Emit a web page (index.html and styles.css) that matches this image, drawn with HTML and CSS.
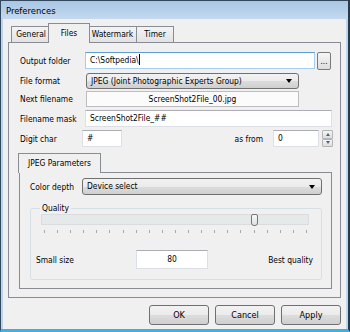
FILE: index.html
```html
<!DOCTYPE html>
<html lang="en">
<head>
    <meta charset="UTF-8">
    <title>Preferences</title>
    <link rel="stylesheet" href="styles.css">
</head>
<body>
<div class="window">
    <div class="titlebar">Preferences</div>
    <div class="client">
        <div class="tabs">
            <div class="tab t-general">General</div>
            <div class="tab t-files active">Files</div>
            <div class="tab t-watermark">Watermark</div>
            <div class="tab t-timer">Timer</div>
        </div>
        <div class="panel">
            <div class="row r1">
                <span class="lbl">Output folder</span>
                <div class="edit focus w-out">C:\Softpedia\<span class="caret"></span></div>
                <div class="dots">...</div>
            </div>
            <div class="row r2">
                <span class="lbl">File format</span>
                <div class="combo w-format">JPEG (Joint Photographic Experts Group)<span class="arrow"></span></div>
            </div>
            <div class="row r3">
                <span class="lbl">Next filename</span>
                <div class="readonly">ScreenShot2File_00.jpg</div>
            </div>
            <div class="row r4">
                <span class="lbl">Filename mask</span>
                <div class="edit w-mask">ScreenShot2File_##</div>
            </div>
            <div class="row r5">
                <span class="lbl">Digit char</span>
                <div class="edit w-digit">#</div>
                <span class="asfrom">as from</span>
                <div class="edit w-from">0</div>
                <div class="spin">
                    <div class="spin-btn"><span class="up"></span></div>
                    <div class="spin-btn"><span class="down"></span></div>
                </div>
            </div>

            <div class="subtabs">
                <div class="tab active t-jpeg">JPEG Parameters</div>
            </div>
            <div class="subpanel">
                <div class="row">
                    <span class="lbl lbl-depth">Color depth</span>
                    <div class="combo w-depth">Device select<span class="arrow"></span></div>
                </div>
                <fieldset class="group">
                    <legend>Quality</legend>
                    <div class="track">
                        <div class="thumb"></div>
                    </div>
                    <div class="ticks">
                        <i></i><i></i><i></i><i></i><i></i><i></i><i></i>
                        <i></i><i></i><i></i><i></i><i></i><i></i><i></i>
                        <i></i><i></i><i></i><i></i><i></i><i></i><i></i>
                    </div>
                    <div class="row quality-row">
                        <span class="lbl-small">Small size</span>
                        <div class="edit w-quality">80</div>
                        <span class="lbl-best">Best quality</span>
                    </div>
                </fieldset>
            </div>
        </div>
        <div class="buttons">
            <button class="btn">OK</button>
            <button class="btn">Cancel</button>
            <button class="btn">Apply</button>
        </div>
    </div>
</div>
</body>
</html>
```

FILE: styles.css
```css
html, body {
    margin: 0;
    padding: 0;
}

body {
    width: 350px;
    height: 332px;
    overflow: hidden;
    font-family: "DejaVu Sans Condensed", "DejaVu Sans", sans-serif;
    font-stretch: condensed;
    font-size: 8.4px;
    color: #000;
}

.window {
    width: 350px;
    height: 332px;
    box-sizing: border-box;
    border-left: 1px solid #34485d;
    border-top: 1px solid #34485d;
    border-right: 2px solid #2b3a4a;
    border-bottom: 3px solid #3fb0e0;
    background: #bcd4ec;
    padding: 0 2px 0 2px;
    display: flex;
    flex-direction: column;
}

.titlebar {
    height: 18px;
    line-height: 19px;
    font-size: 9.4px;
    background: linear-gradient(#a9c6e4, #c3d9ef);
    margin: 0 -2px;
    padding-left: 5px;
}

.client {
    flex: 1;
    background: #f0f0f0;
    padding: 4px 5px 0 5px;
}

/* tabs */

.tabs, .subtabs {
    display: flex;
    align-items: flex-end;
    height: 19px;
    padding-left: 3px;
}

.tab {
    box-sizing: border-box;
    height: 16px;
    line-height: 15px;
    text-align: center;
    border: 1px solid #898c95;
    border-bottom: 0;
    margin-right: -1px;
    background: linear-gradient(#f4f4f4, #e2e2e2);
}

.tab.active {
    position: relative;
    z-index: 1;
    height: 20px;
    line-height: 18px;
    margin: 0 -2px -1px -2px;
    background: #f0f0f0;
}

.t-general { width: 40px; }
.t-files { width: 42px; }
.t-watermark { width: 49px; }
.t-timer { width: 38px; }

.panel {
    box-sizing: border-box;
    height: 256px;
    border: 1px solid #898c95;
    background: #f0f0f0;
    padding: 9px 7px 0 11px;
}

/* rows */

.row {
    display: flex;
    align-items: center;
    height: 17px;
}

.r2 { margin-top: 4px; height: 16px; }
.r3 { margin-top: 2px; height: 16px; }
.r4 { margin-top: 3px; }
.r5 { margin-top: 3px; }

.lbl {
    width: 65px;
    flex: none;
}

.edit {
    box-sizing: border-box;
    height: 100%;
    background: #fff;
    border: 1px solid #dcdfe6;
    border-top-color: #abadb3;
    padding-left: 4px;
    line-height: 15px;
    white-space: nowrap;
}

.edit.focus {
    border-color: #a7cdef;
    border-top-color: #5f9bd3;
}

.caret {
    display: inline-block;
    width: 1px;
    height: 11px;
    background: #000;
    vertical-align: -2px;
}

.w-out { width: 230px; }
.w-mask { width: 247px; }
.w-digit { width: 40px; margin-left: -3px; }
.w-from { width: 46px; }

.dots {
    box-sizing: border-box;
    width: 14px;
    height: 18px;
    margin-left: 2px;
    border: 1px solid #7a7a7a;
    border-radius: 2px;
    background: linear-gradient(#f6f6f6, #dddddd);
    font-size: 8px;
    text-align: center;
    line-height: 18px;
}

.combo {
    position: relative;
    box-sizing: border-box;
    height: 100%;
    margin-left: 1px;
    border: 1px solid #707070;
    border-radius: 3px;
    background: linear-gradient(#f2f2f2 0%, #ebebeb 50%, #dddddd 50%, #cfcfcf 100%);
    padding-left: 4px;
    line-height: 14px;
    white-space: nowrap;
}

.w-format { width: 213px; }
.w-depth { width: 240px; margin-left: 0; height: 17px; line-height: 15px; }

.arrow {
    position: absolute;
    right: 6px;
    top: 50%;
    margin-top: -2px;
    border-left: 3.5px solid transparent;
    border-right: 3.5px solid transparent;
    border-top: 4px solid #000;
}

.readonly {
    box-sizing: border-box;
    width: 213px;
    height: 100%;
    margin-left: 1px;
    background: #fbfbfb;
    border: 1px solid #bdbdbd;
    text-align: center;
    line-height: 14px;
}

.asfrom {
    margin-left: auto;
    margin-right: 10px;
}

.spin {
    width: 11px;
    height: 17px;
    margin-left: 3px;
    display: flex;
    flex-direction: column;
}

.spin-btn {
    flex: 1;
    box-sizing: border-box;
    border: 1px solid #b4b4b4;
    border-radius: 1px;
    background: linear-gradient(#f5f5f5, #dedede);
    display: flex;
    align-items: center;
    justify-content: center;
}

.up, .down {
    border-left: 2.5px solid transparent;
    border-right: 2.5px solid transparent;
}

.up { border-bottom: 3px solid #4d6185; }
.down { border-top: 3px solid #4d6185; }

/* JPEG parameters */

.subtabs {
    margin-top: 6px;
    margin-left: -1px;
    padding-left: 1px;
}

.t-jpeg { width: 83px; margin-left: 0; }

.subpanel {
    box-sizing: border-box;
    width: 313px;
    height: 117px;
    margin-left: -1px;
    border: 1px solid #898c95;
    background: #f0f0f0;
    padding: 5px 0 0 10px;
}

.lbl-depth { width: 52px; }

.group {
    box-sizing: border-box;
    width: 292px;
    height: 77px;
    margin: 8px 0 0 0;
    padding: 0 8px 0 5px;
    border: 1px solid #d5dfe5;
    border-radius: 3px;
    min-width: 0;
}

.group legend {
    padding: 0 2px;
    margin-left: 4px;
    line-height: 11px;
}

.track {
    position: relative;
    width: 268px;
    height: 11px;
    margin: 0 0 0 5px;
    box-sizing: border-box;
    background: #e6e9ea;
    border: 1px solid #dadddf;
}

.thumb {
    position: absolute;
    left: 209px;
    top: -1px;
    width: 7px;
    height: 12px;
    box-sizing: border-box;
    border: 1px solid #757575;
    border-radius: 2px 2px 3px 3px;
    background: linear-gradient(#f8f8f8, #e0e0e0);
}

.ticks {
    width: 263px;
    margin: 5px 0 0 8px;
    height: 3px;
    display: flex;
    justify-content: space-between;
}

.ticks i {
    width: 1px;
    height: 3px;
    background: #a8a8a8;
}

.quality-row {
    margin-top: 17px;
    height: 19px;
}

.lbl-small {
    width: 100px;
}

.w-quality {
    width: 72px;
    text-align: center;
    padding: 0;
    line-height: 17px;
}

.lbl-best {
    margin-left: auto;
}

/* buttons */

.buttons {
    display: flex;
    justify-content: flex-end;
    gap: 6px;
    margin-top: 7px;
}

.btn {
    width: 60px;
    height: 20px;
    padding: 0;
    font-family: inherit;
    font-size: 9px;
    border: 1px solid #707070;
    border-radius: 3px;
    background: linear-gradient(#f2f2f2 0%, #ebebeb 50%, #dddddd 50%, #cfcfcf 100%);
    color: #000;
}
```
